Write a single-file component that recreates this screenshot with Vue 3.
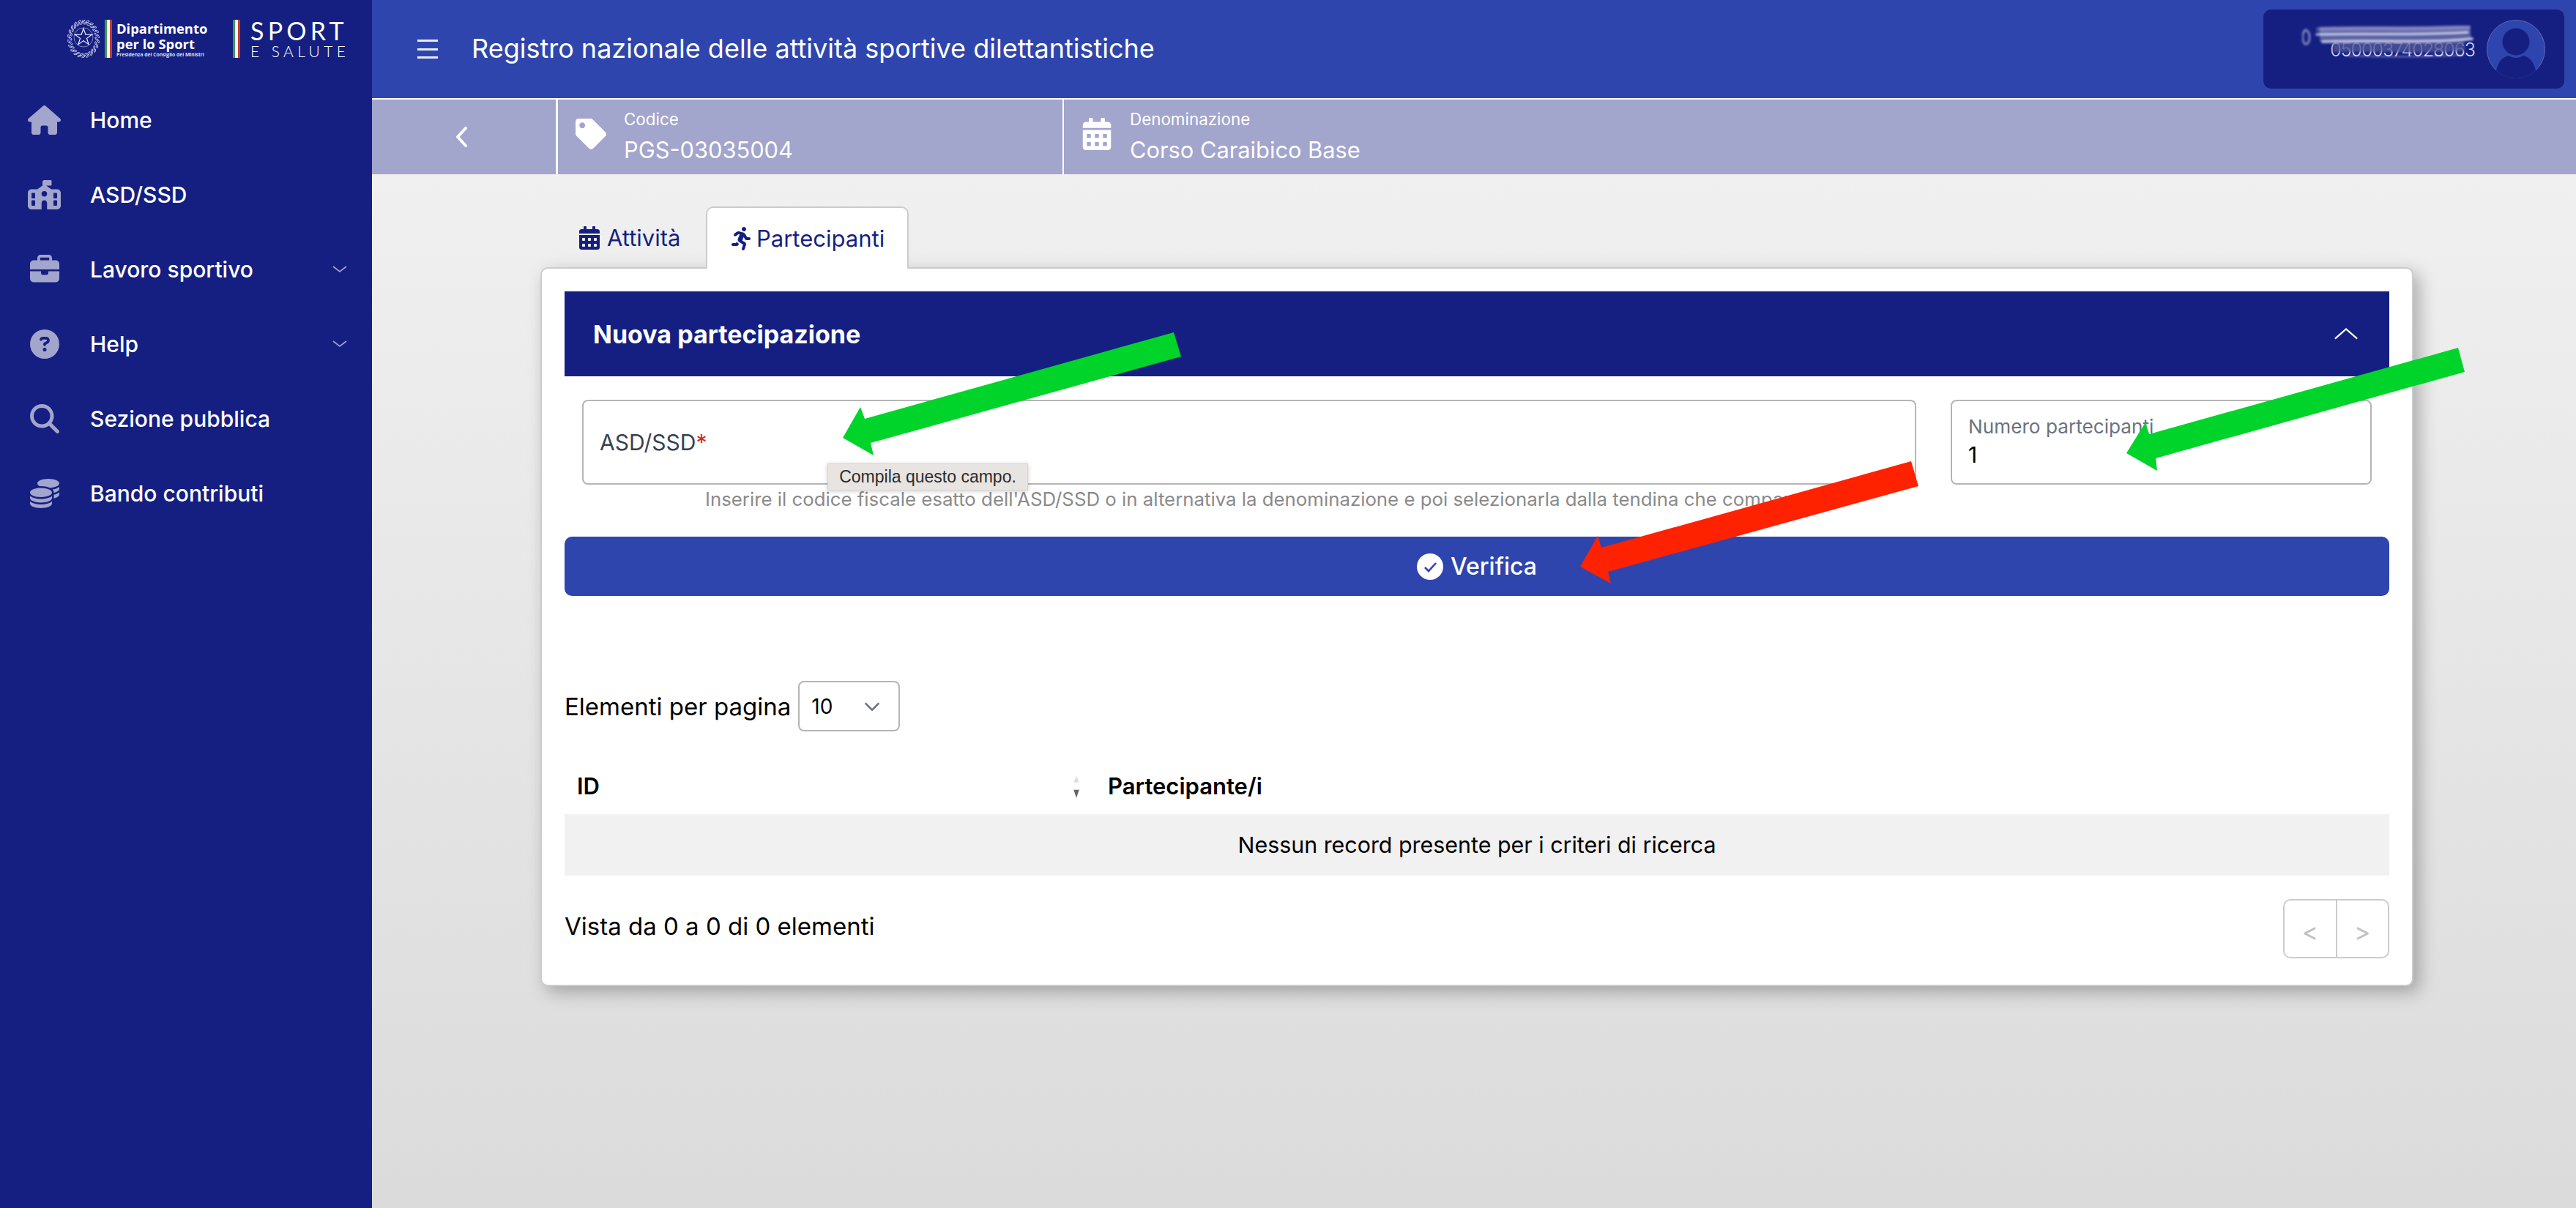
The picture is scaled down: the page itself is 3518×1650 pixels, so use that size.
<template>
  <div class="page">
    <aside class="sidebar">
      <div class="logos">
        <svg class="emblem" viewBox="0 0 44 52">
          <g fill="none" stroke="#e4e6f5" stroke-width=".8">
            <ellipse v-for="leaf in wreathLeaves" :key="leaf.key" :cx="leaf.x" :cy="leaf.y" rx="2.4" ry="1" :transform="leaf.t" />
          </g>
          <circle cx="22" cy="24" r="13" fill="none" stroke="#e4e6f5" stroke-width=".5" />
          <path d="M22 12l2.9 8.2h8.6l-7 5.2 2.6 8.2-7.1-5-7.1 5 2.6-8.2-7-5.2h8.6z" fill="none" stroke="#fff" stroke-width="1.1" />
        </svg>
        <span class="flag"><i></i><i></i><i></i></span>
        <div class="dip">
          <div class="dip-name">Dipartimento<br />per lo Sport</div>
          <div class="dip-sub">Presidenza del Consiglio dei Ministri</div>
        </div>
        <span class="flag flag-2"><i></i><i></i><i></i></span>
        <div class="sport">
          <div class="sport-top">SPORT</div>
          <div class="sport-sub">E SALUTE</div>
        </div>
      </div>
      <nav class="nav">
        <a v-for="item in navItems" :key="item.label" class="nav-item">
          <span class="nav-icon">
            <svg :viewBox="item.box" class="nav-svg"><path :d="item.d" /></svg>
          </span>
          <span class="nav-label">{{ item.label }}</span>
          <svg v-if="item.sub" class="nav-chev" viewBox="0 0 20 10"><path d="M1 1l9 7 9-7" /></svg>
        </a>
      </nav>
    </aside>

    <div class="main">
      <header class="topbar">
        <div class="burger"><i></i><i></i><i></i></div>
        <h1 class="title">Registro nazionale delle attività sportive dilettantistiche</h1>
        <div class="user">
          <div class="user-code">
            <span>05000374028063</span>
            <svg class="scribble" viewBox="0 0 240 44">
              <path d="M42 29c60-3 120 3 180-2" fill="none" stroke="#4d5599" stroke-width="15" opacity=".8" />
              <path d="M24 12c60-2 130 2 206-3" fill="none" stroke="#8e93c4" stroke-width="20" opacity=".55" />
              <g fill="none" stroke="#fff" stroke-linecap="round">
                <path d="M5 6c-5 2-6 15-1 19 4 1 6-3 6-9 0-5-2-9-5-10z" stroke-width="3" opacity=".45" />
                <path d="M22 5c60-3 140 1 205-3" stroke-width="6" opacity=".25" />
                <path d="M20 12c70-2 130 2 206-3" stroke-width="3.5" opacity=".65" />
                <path d="M28 22c60-3 140 3 204-4" stroke-width="4" opacity=".65" />
                <path d="M60 41c60 2 110 2 160-1" stroke-width="2.5" opacity=".3" />
              </g>
            </svg>
          </div>
          <svg class="avatar" viewBox="0 0 80 80">
            <defs><clipPath id="avatar-clip"><circle cx="40" cy="40" r="40" /></clipPath></defs>
            <circle cx="40" cy="40" r="39.6" fill="#2f45ae" stroke="#7f8ccb" stroke-width=".6" />
            <g clip-path="url(#avatar-clip)" fill="#151f82">
              <ellipse cx="40" cy="30" rx="18.5" ry="18.5" />
              <path d="M13 70c2-13 10-20 17-21 3 2 7 3 10 3s7-1 10-3c7 1 15 8 17 21-7 7-16 11-27 11s-20-4-27-11z" />
            </g>
          </svg>
        </div>
      </header>

      <div class="infobar">
        <div class="back">
          <svg viewBox="0 0 18 28" class="back-chev"><path d="M15 2L4 14l11 12" /></svg>
        </div>
        <div class="info-cell info-code">
          <svg viewBox="0 0 512 512" class="info-icon"><path :d="icons.tag" /></svg>
          <div>
            <div class="info-label">Codice</div>
            <div class="info-value">PGS-03035004</div>
          </div>
        </div>
        <div class="info-cell">
          <svg viewBox="0 0 448 512" class="info-icon"><path :d="icons.calendar" /></svg>
          <div>
            <div class="info-label">Denominazione</div>
            <div class="info-value">Corso Caraibico Base</div>
          </div>
        </div>
      </div>

      <div class="content">
        <div class="tabs">
          <div class="tab">
            <svg viewBox="0 0 448 512" class="tab-icon"><path :d="icons.calendar" /></svg>
            Attività
          </div>
          <div class="tab active">
            <svg viewBox="0 0 416 512" class="tab-icon"><path :d="icons.running" /></svg>
            Partecipanti
          </div>
        </div>

        <section class="card">
          <div class="panel-head">
            <span>Nuova partecipazione</span>
            <svg viewBox="0 0 36 18" class="panel-chev"><path d="M2 16L18 2l16 14" /></svg>
          </div>

          <div class="fields">
            <div class="field field-asd">
              <span class="field-text">ASD/SSD<b>*</b></span>
              <div class="tooltip">Compila questo campo.</div>
            </div>
            <div class="field field-num">
              <label for="numero">Numero partecipanti</label>
              <input id="numero" value="1" readonly />
            </div>
          </div>
          <p class="hint">Inserire il codice fiscale esatto dell'ASD/SSD o in alternativa la denominazione e poi selezionarla dalla tendina che compare</p>

          <button class="verify" type="button">
            <svg viewBox="0 0 36 36" class="verify-icon">
              <circle cx="18" cy="18" r="18" fill="#fff" />
              <path d="M11 19l5 5 10-11" fill="none" stroke="#2f45ae" stroke-width="2.6" />
            </svg>
            Verifica
          </button>

          <div class="perpage">
            <span>Elementi per pagina</span>
            <div class="select">
              10
              <svg viewBox="0 0 20 12"><path d="M2 2l8 8 8-8" /></svg>
            </div>
          </div>

          <div class="table">
            <div class="thead">
              <div class="th th-id">
                ID
                <span class="sort">
                  <svg viewBox="0 0 10 32"><path d="M5 0l4 9H1z" fill="#dcdcdc" /><path d="M5 32L1 20h8z" fill="#666" /></svg>
                </span>
              </div>
              <div class="th">Partecipante/i</div>
            </div>
            <div class="empty">Nessun record presente per i criteri di ricerca</div>
          </div>

          <div class="tfoot">
            <span>Vista da 0 a 0 di 0 elementi</span>
            <div class="pager">
              <button type="button">&lt;</button>
              <button type="button">&gt;</button>
            </div>
          </div>
        </section>
      </div>
    </div>

    <!-- frecce disegnate sopra lo screenshot -->
    <svg class="arrows" viewBox="0 0 3518 1650">
      <polygon fill="#00d42b" points="1603,454 1613,487 1189,605 1193,622 1151,598 1175,556 1181,572" />
      <polygon fill="#00d42b" points="3357,475 3366,508 2944,626 2946,643 2904,619 2930,577 2935,593" />
      <polygon fill="#ff2200" points="2610,630 2620,664 2196,781 2200,797 2158,774 2182,732 2187,748" />
    </svg>
  </div>
</template>

<script setup>
const icons = {
  tag: 'M0 252.118V48C0 21.49 21.49 0 48 0h204.118a48 48 0 0 1 33.941 14.059l211.882 211.882c18.745 18.745 18.745 49.137 0 67.882L293.823 497.941c-18.745 18.745-49.137 18.745-67.882 0L14.059 286.059A48 48 0 0 1 0 252.118zM112 64c-26.51 0-48 21.49-48 48s21.49 48 48 48 48-21.49 48-48-21.49-48-48-48z',
  calendar: 'M0 464c0 26.5 21.5 48 48 48h352c26.5 0 48-21.5 48-48V192H0v272zm320-196c0-6.6 5.4-12 12-12h40c6.6 0 12 5.4 12 12v40c0 6.6-5.4 12-12 12h-40c-6.6 0-12-5.4-12-12v-40zm0 128c0-6.6 5.4-12 12-12h40c6.6 0 12 5.4 12 12v40c0 6.6-5.4 12-12 12h-40c-6.6 0-12-5.4-12-12v-40zM192 268c0-6.6 5.4-12 12-12h40c6.6 0 12 5.4 12 12v40c0 6.6-5.4 12-12 12h-40c-6.6 0-12-5.4-12-12v-40zm0 128c0-6.6 5.4-12 12-12h40c6.6 0 12 5.4 12 12v40c0 6.6-5.4 12-12 12h-40c-6.6 0-12-5.4-12-12v-40zM64 268c0-6.6 5.4-12 12-12h40c6.6 0 12 5.4 12 12v40c0 6.6-5.4 12-12 12H76c-6.6 0-12-5.4-12-12v-40zm0 128c0-6.6 5.4-12 12-12h40c6.6 0 12 5.4 12 12v40c0 6.6-5.4 12-12 12H76c-6.6 0-12-5.4-12-12v-40zM400 64h-48V16c0-8.8-7.2-16-16-16h-32c-8.8 0-16 7.2-16 16v48H160V16c0-8.8-7.2-16-16-16h-32c-8.8 0-16 7.2-16 16v48H48C21.5 64 0 85.5 0 112v48h448v-48c0-26.5-21.5-48-48-48z',
  running: 'M272 96c26.51 0 48-21.49 48-48S298.51 0 272 0s-48 21.49-48 48 21.49 48 48 48zM113.69 317.47l-14.8 34.52H32c-17.67 0-32 14.33-32 32s14.33 32 32 32h77.45c19.25 0 36.58-11.44 44.11-29.09l8.79-20.52-10.67-6.3c-17.32-10.23-30.06-25.37-37.99-42.61zM384 223.99h-44.03l-26.06-53.25c-12.5-25.55-35.45-44.23-61.78-50.94l-71.08-21.14c-28.3-6.8-57.77-.55-80.84 17.14l-39.67 30.41c-14.03 10.75-16.69 30.83-5.92 44.86s30.84 16.66 44.86 5.92l39.69-30.41c7.67-5.89 17.44-8 25.27-6.14l14.7 4.37-37.46 87.39c-12.62 29.48-1.31 64.01 26.3 80.31l84.98 50.17-27.47 87.73c-5.28 16.86 4.11 34.81 20.97 40.09 3.19 1 6.41 1.48 9.58 1.48 13.61 0 26.23-8.77 30.52-22.45l31.64-101.06c5.91-20.77-2.89-43.08-21.64-54.39l-61.24-36.14 31.31-78.28 20.27 41.43c8 16.34 24.92 26.89 43.11 26.89H384c17.67 0 32-14.33 32-32s-14.33-31.99-32-31.99z'
}

const navItems = [
  { label: 'Home', box: '0 0 576 512', d: 'M575.8 255.5c0 18-15 32.1-32 32.1h-32l.7 160.2c0 2.7-.2 5.4-.5 8.1V472c0 22.1-17.9 40-40 40H456c-1.1 0-2.2 0-3.3-.1c-1.4 .1-2.8 .1-4.2 .1H416 392c-22.1 0-40-17.9-40-40V448 384c0-17.7-14.3-32-32-32H256c-17.7 0-32 14.3-32 32v64 24c0 22.1-17.9 40-40 40H160 128.1c-1.5 0-3-.1-4.5-.2c-1.2 .1-2.4 .2-3.6 .2H104c-22.1 0-40-17.9-40-40V360c0-.9 0-1.9 .1-2.8V287.6H32c-18 0-32-14-32-32.1c0-9 3-17 10-24L266.4 8c7-7 15-8 22-8s15 2 21 7L564.8 231.5c8 7 12 15 11 24z' },
  { label: 'ASD/SSD', box: '0 0 576 512', d: 'M288 0H400c8.8 0 16 7.2 16 16V80c0 8.8-7.2 16-16 16H320.7l89.6 64H512c35.3 0 64 28.7 64 64V448c0 35.3-28.7 64-64 64H336V400c0-26.5-21.5-48-48-48s-48 21.5-48 48V512H64c-35.3 0-64-28.7-64-64V224c0-35.3 28.7-64 64-64H165.7L256 95.5V32c0-17.7 14.3-32 32-32zm48 240a48 48 0 1 0 -96 0 48 48 0 1 0 96 0zM80 224c-8.8 0-16 7.2-16 16v64c0 8.8 7.2 16 16 16h32c8.8 0 16-7.2 16-16V240c0-8.8-7.2-16-16-16H80zm368 16v64c0 8.8 7.2 16 16 16h32c8.8 0 16-7.2 16-16V240c0-8.8-7.2-16-16-16H464c-8.8 0-16 7.2-16 16zM80 352c-8.8 0-16 7.2-16 16v64c0 8.8 7.2 16 16 16h32c8.8 0 16-7.2 16-16V368c0-8.8-7.2-16-16-16H80zm384 0c-8.8 0-16 7.2-16 16v64c0 8.8 7.2 16 16 16h32c8.8 0 16-7.2 16-16V368c0-8.8-7.2-16-16-16H464z' },
  { label: 'Lavoro sportivo', box: '0 0 512 512', sub: true, d: 'M184 48H328c4.4 0 8 3.6 8 8V96H176V56c0-4.4 3.6-8 8-8zm-56 8V96H64C28.7 96 0 124.7 0 160v96H192 320 512V160c0-35.3-28.7-64-64-64H384V56c0-30.9-25.1-56-56-56H184c-30.9 0-56 25.1-56 56zM512 288H320v32c0 17.7-14.3 32-32 32H224c-17.7 0-32-14.3-32-32V288H0V416c0 35.3 28.7 64 64 64H448c35.3 0 64-28.7 64-64V288z' },
  { label: 'Help', box: '0 0 512 512', sub: true, d: 'M256 512A256 256 0 1 0 256 0a256 256 0 1 0 0 512zM169.8 165.3c7.9-22.3 29.1-37.3 52.8-37.3h58.3c34.9 0 63.1 28.3 63.1 63.1c0 22.6-12.1 43.5-31.7 54.8L280 264.4c-.2 13-10.9 23.6-24 23.6c-13.3 0-24-10.7-24-24V250.5c0-8.6 4.6-16.5 12.1-20.8l44.3-25.4c4.7-2.7 7.6-7.7 7.6-13.1c0-8.4-6.8-15.1-15.1-15.1H222.6c-3.4 0-6.4 2.1-7.5 5.3l-.4 1.2c-4.4 12.5-18.2 19-30.6 14.6s-19-18.2-14.6-30.6l.4-1.2zM224 352a32 32 0 1 1 64 0 32 32 0 1 1 -64 0z' },
  { label: 'Sezione pubblica', box: '0 0 512 512', d: 'M416 208c0 45.9-14.9 88.3-40 122.7L502.6 457.4c12.5 12.5 12.5 32.8 0 45.3s-32.8 12.5-45.3 0L330.7 376c-34.4 25.2-76.8 40-122.7 40C93.1 416 0 322.9 0 208S93.1 0 208 0S416 93.1 416 208zM208 352a144 144 0 1 0 0-288 144 144 0 1 0 0 288z' },
  { label: 'Bando contributi', box: '0 0 512 512', d: 'M512 80c0 18-14.3 34.6-38.4 48c-29.1 16.1-72.5 27.5-122.3 30.9c-3.7-1.8-7.4-3.5-11.3-5C300.6 137.4 248.2 128 192 128c-8.3 0-16.4 .2-24.5 .6l-1.1-.6C142.3 114.6 128 98 128 80c0-44.2 86-80 192-80S512 35.8 512 80zM160.7 161.1c10.2-.7 20.7-1.1 31.3-1.1c62.2 0 117.4 12.3 152.5 31.4C369.3 204.9 384 221.7 384 240c0 4-.7 7.9-2.1 11.7c-4.6 13.2-17 25.3-35 35.5c0 0 0 0 0 0c-.1 .1-.3 .1-.4 .2l0 0 0 0c-.3 .2-.6 .3-.9 .5c-35 19.4-90.8 32-153.6 32c-59.6 0-112.9-11.3-148.2-29.1c-1.9-.9-3.7-1.9-5.5-2.9C14.3 274.6 0 258 0 240c0-34.8 53.4-64.5 128-75.4c10.5-1.5 21.4-2.7 32.7-3.5zM416 240c0-21.9-10.6-39.9-24.1-53.4c28.3-4.4 54.2-11.4 76.2-20.5c16.3-6.8 31.5-15.2 43.9-25.5V176c0 19.3-16.5 37.1-43.8 50.9c-14.6 7.4-32.4 13.7-52.4 18.5c.1-1.8 .2-3.5 .2-5.3zm-32 96c0 18-14.3 34.6-38.4 48c-1.8 1-3.6 1.9-5.5 2.9C304.9 404.7 251.6 416 192 416c-62.8 0-118.6-12.6-153.6-32C14.3 370.6 0 354 0 336V300.6c12.5 10.3 27.6 18.7 43.9 25.5C83.4 342.6 135.8 352 192 352s108.6-9.4 148.1-25.9c7.8-3.2 15.3-6.9 22.4-10.9c6.1-3.4 11.8-7.2 17.2-11.2c1.5-1.1 2.9-2.3 4.3-3.4V304v5.7V336zm32 0V304 278.1c19-4.2 36.5-9.5 52.1-16c16.3-6.8 31.5-15.2 43.9-25.5V272c0 10.5-5 21-14.9 30.9c-16.3 16.3-45 29.7-81.3 38.4c.1-1.7 .2-3.5 .2-5.3zM192 448c56.2 0 108.6-9.4 148.1-25.9c16.3-6.8 31.5-15.2 43.9-25.5V432c0 44.2-86 80-192 80S0 476.2 0 432V396.6c12.5 10.3 27.6 18.7 43.9 25.5C83.4 438.6 135.8 448 192 448z' }
]

// foglie della corona dell'emblema
const wreathLeaves = []
for (let i = 0; i < 44; i++) {
  const a = (i / 44) * Math.PI * 2
  const r = i % 2 ? 18.5 : 15.5
  const x = +(22 + Math.cos(a) * (r + 2)).toFixed(2)
  const y = +(26 + Math.sin(a) * (r + 6)).toFixed(2)
  const deg = +((a * 180) / Math.PI + 60).toFixed(1)
  wreathLeaves.push({ key: i, x, y, t: `rotate(${deg} ${x} ${y})` })
}
</script>

<style>
html, body { margin: 0; }
</style>

<style scoped>
.page {
  position: relative;
  display: flex;
  height: 1650px;
  overflow: hidden;
  font-family: Inter, "Liberation Sans", sans-serif;
  color: #000;
}
.sidebar {
  width: 508px;
  flex: none;
  background: #151f82;
  color: #fff;
}
.logos {
  display: flex;
  align-items: center;
  height: 106px;
  padding-left: 92px;
}
.emblem { width: 44px; height: 52px; flex: none; }
.flag {
  display: flex;
  width: 10px;
  height: 52px;
  margin-left: 7px;
  flex: none;
}
.flag i { flex: 1; }
.flag i:nth-child(1) { background: #3f9a56; }
.flag i:nth-child(2) { background: #fff; }
.flag i:nth-child(3) { background: #c8392f; }
.flag-2 { margin-left: 34px; }
.dip { margin-left: 6px; width: 125px; }
.dip-name {
  font-family: "Open Sans", sans-serif;
  font-weight: 700;
  font-size: 18.4px;
  line-height: 21px;
  white-space: nowrap;
}
.dip-sub {
  font-family: "Open Sans", sans-serif;
  font-weight: 600;
  font-size: 6.9px;
  line-height: 9px;
  white-space: nowrap;
}
.sport { margin-left: 14px; }
.sport-top {
  font-family: Lato, sans-serif;
  font-size: 34px;
  line-height: 32px;
  letter-spacing: 5.2px;
}
.sport-sub {
  font-family: Lato, sans-serif;
  font-size: 21px;
  line-height: 22px;
  margin-top: 1px;
  letter-spacing: 5.4px;
  font-weight: 300;
}
.nav { padding-top: 7px; }
.nav-item {
  display: flex;
  align-items: center;
  height: 102px;
  padding-left: 38px;
  font-size: 30px;
  font-weight: 500;
}
.nav-icon {
  width: 45px;
  height: 40px;
  margin-right: 40px;
  display: flex;
  justify-content: center;
}
.nav-svg { height: 40px; fill: #a2a5cc; }
.nav-label { flex: 1; }
.nav-chev {
  width: 20px;
  height: 10px;
  margin-right: 34px;
  fill: none;
  stroke: #a2a5cc;
  stroke-width: 1.6;
}
.main {
  flex: 1;
  min-width: 0;
  display: flex;
  flex-direction: column;
}
.topbar {
  height: 134px;
  border-bottom: 2px solid #fff;
  background: #2f45ae;
  color: #fff;
  display: flex;
  align-items: center;
  padding: 0 16px 0 62px;
}
.burger {
  width: 28px;
  height: 26px;
  display: flex;
  flex-direction: column;
  justify-content: space-between;
  margin-right: 47px;
}
.burger i { height: 3px; background: #e8eaf6; }
.title {
  margin: -2px 0 0 -1px;
  flex: 1;
  font-size: 36px;
  font-weight: 400;
}
.user {
  width: 411px;
  height: 108px;
  background: #151f82;
  border-radius: 10px;
  display: flex;
  align-items: flex-start;
  justify-content: flex-end;
  padding: 14px 26px 0 0;
  box-sizing: border-box;
}
.user-code {
  position: relative;
  width: 240px;
  height: 44px;
  margin: 8px 12px 0 0;
  color: #d6d8ee;
  font-size: 25px;
  font-weight: 300;
}
.user-code span {
  position: absolute;
  right: 4px;
  bottom: -4px;
  white-space: nowrap;
  letter-spacing: -1px;
}
.scribble {
  position: absolute;
  left: 0;
  top: 0;
  width: 240px;
  height: 44px;
  filter: blur(1.5px);
}
.avatar { width: 80px; height: 80px; flex: none; }
.infobar {
  height: 102px;
  background: #a2a5cc;
  color: #fff;
  display: flex;
}
.back {
  width: 251px;
  flex: none;
  display: flex;
  align-items: center;
  justify-content: center;
  border-right: 3px solid #fff;
  box-sizing: content-box;
  padding-right: 0;
}
.back-chev {
  width: 18px;
  height: 28px;
  margin-right: 8px;
  fill: none;
  stroke: #fff;
  stroke-width: 4;
  stroke-linecap: round;
  stroke-linejoin: round;
}
.info-cell {
  display: flex;
  align-items: center;
  gap: 24px;
  padding-left: 24px;
}
.info-code {
  width: 691px;
  flex: none;
  box-sizing: border-box;
  border-right: 2px solid #fff;
}
.info-icon { height: 44px; width: 42px; fill: #fff; margin-top: -8px; flex: none; }
.info-label { font-size: 22.4px; line-height: 28px; margin-top: -2px; }
.info-value { font-size: 30.8px; line-height: 38px; margin-top: 9px; }
.content {
  flex: 1;
  background: linear-gradient(#f0f0f0, #dbdbdb);
  padding: 44px 222px 0 230px;
}
.tabs {
  display: flex;
  height: 83px;
  padding-left: 19px;
  font-size: 31px;
  color: #151f82;
}
.tab {
  width: 207px;
  box-sizing: border-box;
  height: 85px;
  display: flex;
  align-items: center;
  gap: 8px;
  padding-left: 33px;
}
.tab:not(.active) { gap: 10px; padding-left: 34px; }
.tab.active {
  width: 277px;
  background: #fff;
  border: 2px solid #ccc;
  border-bottom: 0;
  border-radius: 10px 10px 0 0;
  position: relative;
  z-index: 1;
}
.tab-icon { height: 32px; fill: #151f82; flex: none; }
.card {
  position: relative;
  background: #fff;
  border: 2px solid #ccc;
  border-radius: 10px;
  box-shadow: 8px 8px 24px rgba(0, 0, 0, .28);
  box-sizing: border-box;
  height: 982px;
  padding: 31px 31px 0;
}
.panel-head {
  height: 116px;
  background: #151f82;
  color: #fff;
  display: flex;
  align-items: center;
  justify-content: space-between;
  padding: 0 42px 0 39px;
  font-size: 34px;
  font-weight: 700;
}
.panel-chev {
  width: 34px;
  height: 18px;
  fill: none;
  stroke: #fff;
  stroke-width: 2.4;
}
.fields {
  display: flex;
  gap: 47px;
  padding: 32px 24px 0 24px;
}
.field {
  position: relative;
  height: 116px;
  box-sizing: border-box;
  border: 2px solid #b5b5b5;
  border-radius: 8px;
  background: #fff;
}
.field-asd {
  flex: 1;
  display: flex;
  align-items: center;
  padding-left: 22px;
}
.field-text { font-size: 30px; color: #374151; }
.field-text b { color: #e02424; font-weight: 400; }
.tooltip {
  position: absolute;
  left: 333px;
  top: 85px;
  width: 274px;
  height: 37px;
  box-sizing: border-box;
  background: #e8e4e1;
  border: 1px solid #d8d4d1;
  box-shadow: 0 1px 6px rgba(0, 0, 0, .2);
  color: #2c2c2c;
  font-family: "Liberation Sans", sans-serif;
  font-size: 23px;
  line-height: 35px;
  text-align: center;
  z-index: 2;
}
.field-num {
  width: 575px;
  flex: none;
  padding: 20px 22px 0;
}
.field-num label {
  display: block;
  font-size: 26.2px;
  line-height: 30px;
  color: #6b7280;
}
.field-num input {
  display: block;
  width: 100%;
  border: 0;
  padding: 0;
  margin-top: 5px;
  outline: none;
  font-family: inherit;
  font-size: 30px;
  line-height: 36px;
  color: #000;
  background: transparent;
}
.hint {
  margin: 2px 0 0;
  padding-left: 192px;
  font-size: 25.8px;
  line-height: 36px;
  color: #8a8a8a;
  white-space: nowrap;
  overflow: hidden;
}
.verify {
  display: flex;
  align-items: center;
  justify-content: center;
  gap: 10px;
  width: 100%;
  height: 81px;
  margin-top: 33px;
  border: 0;
  border-radius: 10px;
  background: #2f45ae;
  color: #fff;
  font-family: inherit;
  font-size: 32px;
  font-weight: 500;
}
.verify-icon { width: 36px; height: 36px; }
.perpage {
  display: flex;
  align-items: center;
  gap: 10px;
  margin-top: 116px;
  font-size: 33px;
}
.select {
  width: 139px;
  height: 69px;
  box-sizing: border-box;
  border: 2px solid #b5b5b5;
  border-radius: 8px;
  display: flex;
  align-items: center;
  justify-content: space-between;
  padding: 0 24px 0 16px;
  font-size: 28px;
}
.select svg {
  width: 24px;
  height: 14px;
  fill: none;
  stroke: #6b7280;
  stroke-width: 2.2;
}
.table { margin-top: 37px; }
.thead {
  display: grid;
  grid-template-columns: 725px 1fr;
  height: 76px;
  padding-bottom: 2px;
  box-sizing: border-box;
  align-items: center;
  font-size: 31px;
  font-weight: 600;
}
.th { padding-left: 17px; }
.th-id {
  display: flex;
  align-items: center;
  justify-content: space-between;
  padding-right: 21px;
}
.sort { display: flex; }
.sort svg { width: 10px; height: 30px; margin-top: 4px; }
.empty {
  height: 84px;
  background: #f1f1f1;
  display: flex;
  align-items: center;
  justify-content: center;
  font-size: 30.4px;
}
.tfoot {
  display: flex;
  align-items: flex-start;
  justify-content: space-between;
  margin-top: 32px;
  font-size: 33px;
}
.tfoot span { line-height: 74px; }
.pager {
  display: flex;
  width: 145px;
  height: 81px;
  box-sizing: border-box;
  border: 2px solid #c9ccd1;
  border-radius: 10px;
}
.pager button {
  flex: 1;
  border: 0;
  background: transparent;
  color: #c2c2c2;
  font-family: inherit;
  font-size: 34px;
  padding: 8px 0 0;
}
.pager button + button { border-left: 2px solid #c9ccd1; }
.arrows {
  position: absolute;
  left: 0;
  top: 0;
  width: 3518px;
  height: 1650px;
  pointer-events: none;
  z-index: 5;
}
</style>
